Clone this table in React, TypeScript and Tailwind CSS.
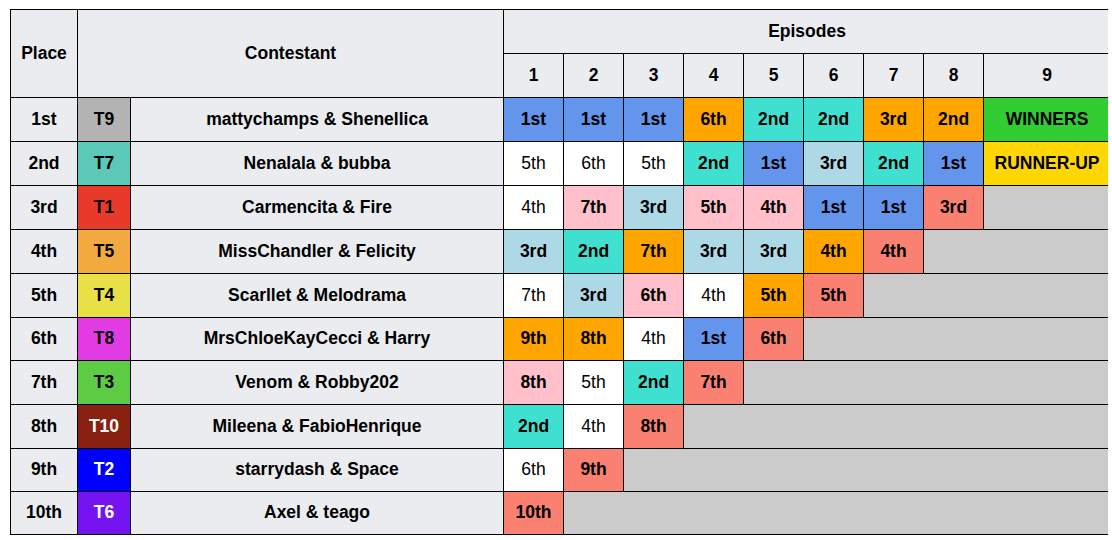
type Cell = { text?: string; bg: string; bold?: boolean; span?: number };

const C = {
    first: 'bg-[#6495ed]',
    second: 'bg-[#40e0d0]',
    orange: 'bg-[#ffa500]',
    light: 'bg-[#add8e6]',
    pink: 'bg-[#ffc0cb]',
    out: 'bg-[#fa8072]',
    white: 'bg-white',
    win: 'bg-[#32cd32]',
    runner: 'bg-[#ffd700]',
    none: 'bg-[#cbcbcb]',
};

const b = (text: string, bg: string): Cell => ({ text, bg, bold: true });
const w = (text: string): Cell => ({ text, bg: C.white });
const gap = (span: number): Cell => ({ bg: C.none, span });

type Row = {
    place: string;
    team: string;
    teamBg: string;
    teamText: string;
    name: string;
    h: string;
    cells: Cell[];
};

const rows: Row[] = [
    {
        place: '1st', team: 'T9', teamBg: 'bg-[#b3b3b3]', teamText: 'text-black', name: 'mattychamps & Shenellica', h: 'h-[44px]',
        cells: [b('1st', C.first), b('1st', C.first), b('1st', C.first), b('6th', C.orange), b('2nd', C.second), b('2nd', C.second), b('3rd', C.orange), b('2nd', C.orange), b('WINNERS', C.win)],
    },
    {
        place: '2nd', team: 'T7', teamBg: 'bg-[#5bc8b8]', teamText: 'text-black', name: 'Nenalala & bubba', h: 'h-[44px]',
        cells: [w('5th'), w('6th'), w('5th'), b('2nd', C.second), b('1st', C.first), b('3rd', C.light), b('2nd', C.second), b('1st', C.first), b('RUNNER-UP', C.runner)],
    },
    {
        place: '3rd', team: 'T1', teamBg: 'bg-[#e83a28]', teamText: 'text-black', name: 'Carmencita & Fire', h: 'h-[44px]',
        cells: [w('4th'), b('7th', C.pink), b('3rd', C.light), b('5th', C.pink), b('4th', C.pink), b('1st', C.first), b('1st', C.first), b('3rd', C.out), gap(1)],
    },
    {
        place: '4th', team: 'T5', teamBg: 'bg-[#f2a93d]', teamText: 'text-black', name: 'MissChandler & Felicity', h: 'h-[44px]',
        cells: [b('3rd', C.light), b('2nd', C.second), b('7th', C.orange), b('3rd', C.light), b('3rd', C.light), b('4th', C.orange), b('4th', C.out), gap(2)],
    },
    {
        place: '5th', team: 'T4', teamBg: 'bg-[#e8e046]', teamText: 'text-black', name: 'Scarllet & Melodrama', h: 'h-[44px]',
        cells: [w('7th'), b('3rd', C.light), b('6th', C.pink), w('4th'), b('5th', C.orange), b('5th', C.out), gap(3)],
    },
    {
        place: '6th', team: 'T8', teamBg: 'bg-[#e33be3]', teamText: 'text-black', name: 'MrsChloeKayCecci & Harry', h: 'h-[43px]',
        cells: [b('9th', C.orange), b('8th', C.orange), w('4th'), b('1st', C.first), b('6th', C.out), gap(4)],
    },
    {
        place: '7th', team: 'T3', teamBg: 'bg-[#5ecb45]', teamText: 'text-black', name: 'Venom & Robby202', h: 'h-[44px]',
        cells: [b('8th', C.pink), w('5th'), b('2nd', C.second), b('7th', C.out), gap(5)],
    },
    {
        place: '8th', team: 'T10', teamBg: 'bg-[#88210f]', teamText: 'text-white', name: 'Mileena & FabioHenrique', h: 'h-[44px]',
        cells: [b('2nd', C.second), w('4th'), b('8th', C.out), gap(6)],
    },
    {
        place: '9th', team: 'T2', teamBg: 'bg-[#0000ff]', teamText: 'text-white', name: 'starrydash & Space', h: 'h-[43px]',
        cells: [w('6th'), b('9th', C.out), gap(7)],
    },
    {
        place: '10th', team: 'T6', teamBg: 'bg-[#7514f0]', teamText: 'text-white', name: 'Axel & teago', h: 'h-[43px]',
        cells: [b('10th', C.out), gap(8)],
    },
];

const td = 'border border-black text-center align-middle p-0';

export default function App() {
    return (
        <div className="w-[1112px] h-[540px] bg-white pt-[9px] pl-[10px]">
            <div className="w-[1098px] overflow-hidden">
                <table
                    className="table-fixed border-collapse w-[1100px] text-[17.5px] text-black leading-none"
                    style={{ fontFamily: '"Liberation Sans", Arial, sans-serif' }}
                >
                    <colgroup>
                        <col className="w-[67px]" />
                        <col className="w-[53px]" />
                        <col className="w-[373px]" />
                        {[1, 2, 3, 4, 5, 6, 7, 8].map((n) => (
                            <col key={n} className="w-[60px]" />
                        ))}
                        <col className="w-[127px]" />
                    </colgroup>
                    <thead>
                        <tr className="h-[44px]">
                            <th rowSpan={2} className={`${td} bg-[#eaecf0] font-bold`}>Place</th>
                            <th rowSpan={2} colSpan={2} className={`${td} bg-[#eaecf0] font-bold`}>Contestant</th>
                            <th colSpan={9} className={`${td} bg-[#eaecf0] font-bold`}>Episodes</th>
                        </tr>
                        <tr className="h-[44px]">
                            {[1, 2, 3, 4, 5, 6, 7, 8, 9].map((n) => (
                                <th key={n} className={`${td} bg-[#eaecf0] font-bold`}>{n}</th>
                            ))}
                        </tr>
                    </thead>
                    <tbody>
                        {rows.map((r) => (
                            <tr key={r.place} className={r.h}>
                                <td className={`${td} bg-[#eaecf0] font-bold`}>{r.place}</td>
                                <td className={`${td} ${r.teamBg} ${r.teamText} font-bold`}>{r.team}</td>
                                <td className={`${td} bg-[#eaecf0] font-bold`}>{r.name}</td>
                                {r.cells.map((c, i) => (
                                    <td
                                        key={i}
                                        colSpan={c.span}
                                        className={`${td} ${c.bg} ${c.bold ? 'font-bold' : 'font-normal'}`}
                                    >
                                        {c.text}
                                    </td>
                                ))}
                            </tr>
                        ))}
                    </tbody>
                </table>
            </div>
        </div>
    );
}
